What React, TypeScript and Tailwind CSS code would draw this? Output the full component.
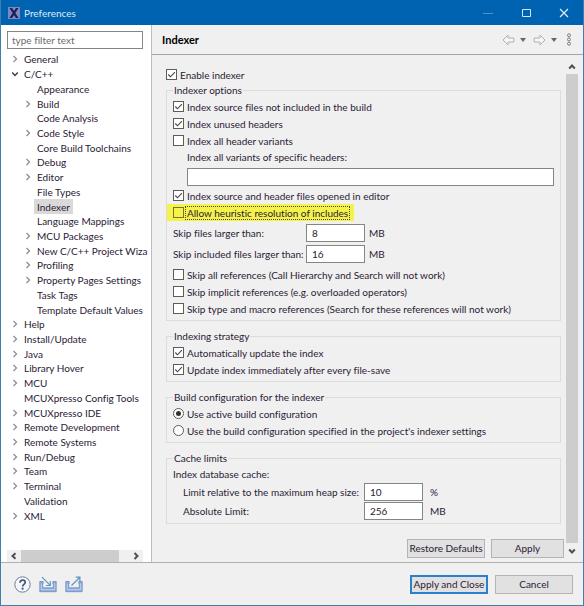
import { useState, type ReactNode } from "react";

type TreeItem = { label: string; level: number; state?: "open" | "closed" };

const TREE: TreeItem[] = [
  { label: "General", level: 0, state: "closed" },
  { label: "C/C++", level: 0, state: "open" },
  { label: "Appearance", level: 1 },
  { label: "Build", level: 1, state: "closed" },
  { label: "Code Analysis", level: 1 },
  { label: "Code Style", level: 1, state: "closed" },
  { label: "Core Build Toolchains", level: 1 },
  { label: "Debug", level: 1, state: "closed" },
  { label: "Editor", level: 1, state: "closed" },
  { label: "File Types", level: 1 },
  { label: "Indexer", level: 1 },
  { label: "Language Mappings", level: 1 },
  { label: "MCU Packages", level: 1, state: "closed" },
  { label: "New C/C++ Project Wiza", level: 1, state: "closed" },
  { label: "Profiling", level: 1, state: "closed" },
  { label: "Property Pages Settings", level: 1, state: "closed" },
  { label: "Task Tags", level: 1 },
  { label: "Template Default Values", level: 1 },
  { label: "Help", level: 0, state: "closed" },
  { label: "Install/Update", level: 0, state: "closed" },
  { label: "Java", level: 0, state: "closed" },
  { label: "Library Hover", level: 0, state: "closed" },
  { label: "MCU", level: 0, state: "closed" },
  { label: "MCUXpresso Config Tools", level: 0 },
  { label: "MCUXpresso IDE", level: 0, state: "closed" },
  { label: "Remote Development", level: 0, state: "closed" },
  { label: "Remote Systems", level: 0, state: "closed" },
  { label: "Run/Debug", level: 0, state: "closed" },
  { label: "Team", level: 0, state: "closed" },
  { label: "Terminal", level: 0, state: "closed" },
  { label: "Validation", level: 0 },
  { label: "XML", level: 0, state: "closed" },
];

function Chevron({ dir, className = "" }: { dir: "up" | "down" | "left" | "right"; className?: string }) {
  const points = {
    up: "1.2,5.5 4,2.5 6.8,5.5",
    down: "1.2,2.5 4,5.5 6.8,2.5",
    left: "5.5,1.2 2.5,4 5.5,6.8",
    right: "2.5,1 5.5,4 2.5,7",
  };
  return (
    <svg viewBox="0 0 8 8" className={`size-2 fill-none ${className}`}>
      <polyline points={points[dir]} stroke="currentColor" />
    </svg>
  );
}

function Check({ label, defaultChecked, focused }: { label: string; defaultChecked?: boolean; focused?: boolean }) {
  return (
    <label className={`flex h-[17px] w-fit items-center gap-px ${focused ? "-ml-1.5 bg-[#f5f24c] pl-1.5 pr-1" : ""}`}>
      <span className="grid">
        <input
          type="checkbox"
          defaultChecked={defaultChecked}
          className={`peer col-start-1 row-start-1 size-[11px] appearance-none border ${focused ? "border-[#77752c]" : "border-[#5c5c5c] bg-white"}`}
        />
        <svg viewBox="0 0 11 11" className="pointer-events-none invisible col-start-1 row-start-1 size-[11px] fill-none peer-checked:visible">
          <path d="M2.3 5.5 4.5 7.8 8.9 3.2" stroke="#444" strokeWidth="1.1" />
        </svg>
      </span>
      <span className={`border px-px leading-[12px] ${focused ? "border-dotted border-[#4b4a20]" : "border-transparent"}`}>{label}</span>
    </label>
  );
}

function Radio({ label, checked, onChange }: { label: string; checked: boolean; onChange: () => void }) {
  return (
    <label className="flex h-[17px] w-fit items-center gap-0.5">
      <span className="grid place-items-center">
        <input
          type="radio"
          name="build-config"
          checked={checked}
          onChange={onChange}
          className="peer col-start-1 row-start-1 size-[11px] appearance-none rounded-full border border-[#5c5c5c] bg-white"
        />
        <span className="pointer-events-none invisible col-start-1 row-start-1 size-[5px] rounded-full bg-[#333] peer-checked:visible" />
      </span>
      <span className="pl-px">{label}</span>
    </label>
  );
}

function Group({ title, children }: { title: string; children: ReactNode }) {
  return (
    <fieldset className="min-w-0 border border-[#dcdcdc] px-1.5 pb-[3px] pt-px">
      <legend className="px-px leading-[14px]">{title}</legend>
      {children}
    </fieldset>
  );
}

function SizeField({ id, label, value, unit, cols }: { id: string; label: string; value: string; unit: string; cols: string }) {
  return (
    <div className={`grid items-center ${cols}`}>
      <label htmlFor={id}>{label}</label>
      <input id={id} defaultValue={value} className="h-[18px] w-full border border-[#858585] bg-white px-[5px]" />
      <span>{unit}</span>
    </div>
  );
}

function PushButton({ children, primary, width = "w-[78px]" }: { children: ReactNode; primary?: boolean; width?: string }) {
  return (
    <button
      className={`h-[19px] bg-[#e1e1e1] text-center ${width} ${primary ? "border-2 border-[#2b7fcd] leading-[15px]" : "border border-[#b4b4b4] leading-[17px]"}`}
    >
      {children}
    </button>
  );
}

function TitleBar() {
  return (
    <header className="flex h-[25px] items-center bg-[#0063b1] pl-[7px] pr-3.5 text-[#dcebf7]">
      <svg viewBox="0 0 12 12" className="mr-1 size-3">
        <rect width="12" height="12" fill="#8186bd" />
        <path d="M1.5 1h2.6L6 4.1 8 1h2.5L7.3 6l3.3 5H8L6 7.9 4 11H1.4l3.3-5z" fill="#17205f" />
      </svg>
      <h1 className="flex-1">Preferences</h1>
      <div className="flex gap-7">
        <button aria-label="Minimize">
          <svg viewBox="0 0 10 10" className="size-2.5"><path d="M0 5.5h10" stroke="#4b93ce" /></svg>
        </button>
        <button aria-label="Maximize">
          <svg viewBox="0 0 10 10" className="size-2.5"><path d="M1.5 1.5h8v7h-8z" fill="none" stroke="#d5e6f5" /></svg>
        </button>
        <button aria-label="Close">
          <svg viewBox="0 0 10 10" className="size-2.5"><path d="m1 1 8 8m0-8L1 9" stroke="#e5f0fa" strokeWidth="1.1" /></svg>
        </button>
      </div>
    </header>
  );
}

function Sidebar() {
  const [selected, setSelected] = useState("Indexer");
  return (
    <aside className="flex w-[151px] shrink-0 flex-col border-r border-[#bdbdbd] bg-white pl-1.5 pr-2 pt-1.5">
      <input
        aria-label="Filter"
        placeholder="type filter text"
        className="h-[18px] w-full border border-[#858585] px-1 placeholder:text-[#6d6d6d]"
      />
      <ul className="mt-[3px] grid h-[471px] auto-rows-fr">
        {TREE.map((item) => (
          <li key={item.label} className={`flex min-h-0 items-center ${item.level ? "pl-[17px]" : "pl-1"}`}>
            <span className="flex w-2.5 shrink-0 items-center">
              {item.state === "open" && <Chevron dir="down" className="stroke-[1.5] text-[#404040]" />}
              {item.state === "closed" && <Chevron dir="right" className="stroke-[1.3] text-[#8f8f8f]" />}
            </span>
            <button
              onClick={() => setSelected(item.label)}
              className={`h-full px-[3px] leading-[14px] ${selected === item.label ? "bg-[#d9d9d9]" : ""}`}
            >
              {item.label}
            </button>
          </li>
        ))}
      </ul>
      <div className="mt-auto flex h-3 items-center bg-[#f0f0f0] text-[#505050]">
        <button aria-label="Scroll left" className="flex w-3.5 justify-center"><Chevron dir="left" className="stroke-2" /></button>
        <div className="h-full flex-1 bg-[#cdcdcd]" />
        <div className="w-2.5" />
        <button aria-label="Scroll right" className="flex w-3.5 justify-center"><Chevron dir="right" className="stroke-2" /></button>
      </div>
    </aside>
  );
}

function NavArrow({ flip }: { flip?: boolean }) {
  return (
    <svg viewBox="0 0 13 12" className={`h-3 w-[13px] ${flip ? "-scale-x-100" : ""}`}>
      <path d="M6 1.2 1 6l5 4.8V8h5.8V4H6z" fill="#f7f7f7" stroke="#b0b0b0" strokeLinejoin="round" />
    </svg>
  );
}

function Caret() {
  return <svg viewBox="0 0 6 4" className="h-1 w-1.5"><path d="M0 0h6L3 4z" fill="#666" /></svg>;
}

function PageHeader() {
  return (
    <div className="flex h-[30px] items-center border-b border-[#a6a6a6] pl-2.5 pr-[11px]">
      <h2 className="flex-1 text-[11px] font-bold text-black">Indexer</h2>
      <div className="flex items-center gap-[5px]">
        <button aria-label="Back"><NavArrow /></button>
        <button aria-label="Back history" className="mr-0.5 flex"><Caret /></button>
        <button aria-label="Forward"><NavArrow flip /></button>
        <button aria-label="Forward history" className="mr-1 flex"><Caret /></button>
        <button aria-label="View menu">
          <svg viewBox="0 0 6 13" className="h-[13px] w-1.5 fill-none stroke-[#7c7c7c]">
            <circle cx="3" cy="2.3" r="1.5" />
            <circle cx="3" cy="6.5" r="1.5" />
            <circle cx="3" cy="10.7" r="1.5" />
          </svg>
        </button>
      </div>
    </div>
  );
}

function IndexerPage() {
  const [config, setConfig] = useState<"active" | "project">("active");
  return (
    <div className="flex min-w-0 flex-1 flex-col pt-[11px]">
      <div className="pl-3.5 pr-[5px]">
        <Check label="Enable indexer" defaultChecked />
        <div className="flex flex-col gap-2">
          <Group title="Indexer options">
            <Check label="Index source files not included in the build" defaultChecked />
            <Check label="Index unused headers" defaultChecked />
            <Check label="Index all header variants" />
            <div className="mb-px pl-3.5">
              <label htmlFor="variants" className="block leading-[17px]">Index all variants of specific headers:</label>
              <input id="variants" className="mt-0.5 block h-[18px] w-full border border-[#858585] bg-white px-1" />
            </div>
            <Check label="Index source and header files opened in editor" defaultChecked />
            <Check label="Allow heuristic resolution of includes" focused />
            <div className="my-[3px] flex flex-col gap-[3px]">
              <SizeField id="skip" label="Skip files larger than:" value="8" unit="MB" cols="grid-cols-[129px_59px_auto] gap-x-1" />
              <SizeField id="skip-inc" label="Skip included files larger than:" value="16" unit="MB" cols="grid-cols-[129px_59px_auto] gap-x-1" />
            </div>
            <Check label="Skip all references (Call Hierarchy and Search will not work)" />
            <Check label="Skip implicit references (e.g. overloaded operators)" />
            <Check label="Skip type and macro references (Search for these references will not work)" />
          </Group>
          <Group title="Indexing strategy">
            <Check label="Automatically update the index" defaultChecked />
            <Check label="Update index immediately after every file-save" defaultChecked />
          </Group>
          <Group title="Build configuration for the indexer">
            <Radio label="Use active build configuration" checked={config === "active"} onChange={() => setConfig("active")} />
            <Radio
              label="Use the build configuration specified in the project's indexer settings"
              checked={config === "project"}
              onChange={() => setConfig("project")}
            />
          </Group>
          <Group title="Cache limits">
            <p className="leading-[17px]">Index database cache:</p>
            <div className="flex flex-col gap-px pl-2.5">
              <SizeField id="heap" label="Limit relative to the maximum heap size:" value="10" unit="%" cols="grid-cols-[174px_59px_auto] gap-x-[7px]" />
              <SizeField id="abs" label="Absolute Limit:" value="256" unit="MB" cols="grid-cols-[174px_59px_auto] gap-x-[7px]" />
            </div>
          </Group>
        </div>
      </div>
      <div className="mt-auto flex justify-end gap-1.5 pb-1 pr-0.5">
        <PushButton>Restore Defaults</PushButton>
        <PushButton width="w-[73px]">Apply</PushButton>
      </div>
    </div>
  );
}

function Footer() {
  return (
    <footer className="flex h-[43px] items-center border-t border-[#b0b0b0] pl-[13px] pr-2.5">
      <div className="flex flex-1 items-center gap-2">
        <button aria-label="Help">
          <svg viewBox="0 0 17 17" className="size-[17px] fill-none">
            <circle cx="8.5" cy="8.5" r="7.7" fill="#f5f7fa" stroke="#6c7f9c" />
            <path d="M6 6.8C6 5.1 7 4.2 8.6 4.2s2.6.9 2.6 2.3c0 1.8-2.6 2-2.6 4" stroke="#44597a" strokeWidth="1.7" />
            <circle cx="8.6" cy="12.7" r="1.1" fill="#44597a" />
          </svg>
        </button>
        <button aria-label="Import">
          <svg viewBox="0 0 18 17" className="h-[17px] w-[18px] fill-none">
            <path d="M.8 5.5h3.4v2H3.7v4.3h10.6V7.5h-.5v-2h3.4v10.2H.8z" fill="#8fa9d8" stroke="#6d8cc4" strokeWidth=".8" />
            <path d="M2.3 7.5v6.2h13.4V7.5" stroke="#cfdcf1" strokeWidth=".8" />
            <path d="m3 1.2 8 8M11.3 5.2v4.3H7" stroke="#5f96bd" strokeWidth="1.2" />
          </svg>
        </button>
        <button aria-label="Export">
          <svg viewBox="0 0 18 17" className="h-[17px] w-[18px] fill-none">
            <path d="M.8 5.5h3.4v2H3.7v4.3h10.6V7.5h-.5v-2h3.4v10.2H.8z" fill="#8fa9d8" stroke="#6d8cc4" strokeWidth=".8" />
            <path d="M2.3 7.5v6.2h13.4V7.5" stroke="#cfdcf1" strokeWidth=".8" />
            <path d="m6.5 9.5 8.2-8M10.7 1.2h4.2v4.2" stroke="#5f96bd" strokeWidth="1.2" />
          </svg>
        </button>
      </div>
      <div className="flex gap-[7px]">
        <PushButton primary>Apply and Close</PushButton>
        <PushButton>Cancel</PushButton>
      </div>
    </footer>
  );
}

export default function App() {
  return (
    <div className="flex min-h-screen flex-col whitespace-nowrap border-x border-b border-[#3f7fa8] bg-[#f0f0f0] font-['Lato','Open_Sans',sans-serif] text-[10px] leading-[14px] text-[#2b2034] [font-variant-ligatures:none]">
      <TitleBar />
      <div className="flex flex-1">
        <Sidebar />
        <main className="flex min-w-0 flex-1 flex-col">
          <PageHeader />
          <div className="flex flex-1">
            <IndexerPage />
            <div className="mb-1 mr-[5px] flex w-3 flex-col items-center text-[#505050]">
              <button aria-label="Scroll up" className="flex h-[19px] items-end pb-[3px]"><Chevron dir="up" className="stroke-2" /></button>
              <div className="w-full flex-1 bg-[#cdcdcd]" />
              <button aria-label="Scroll down" className="flex h-[15px] items-center"><Chevron dir="down" className="stroke-2" /></button>
            </div>
          </div>
        </main>
      </div>
      <Footer />
    </div>
  );
}
